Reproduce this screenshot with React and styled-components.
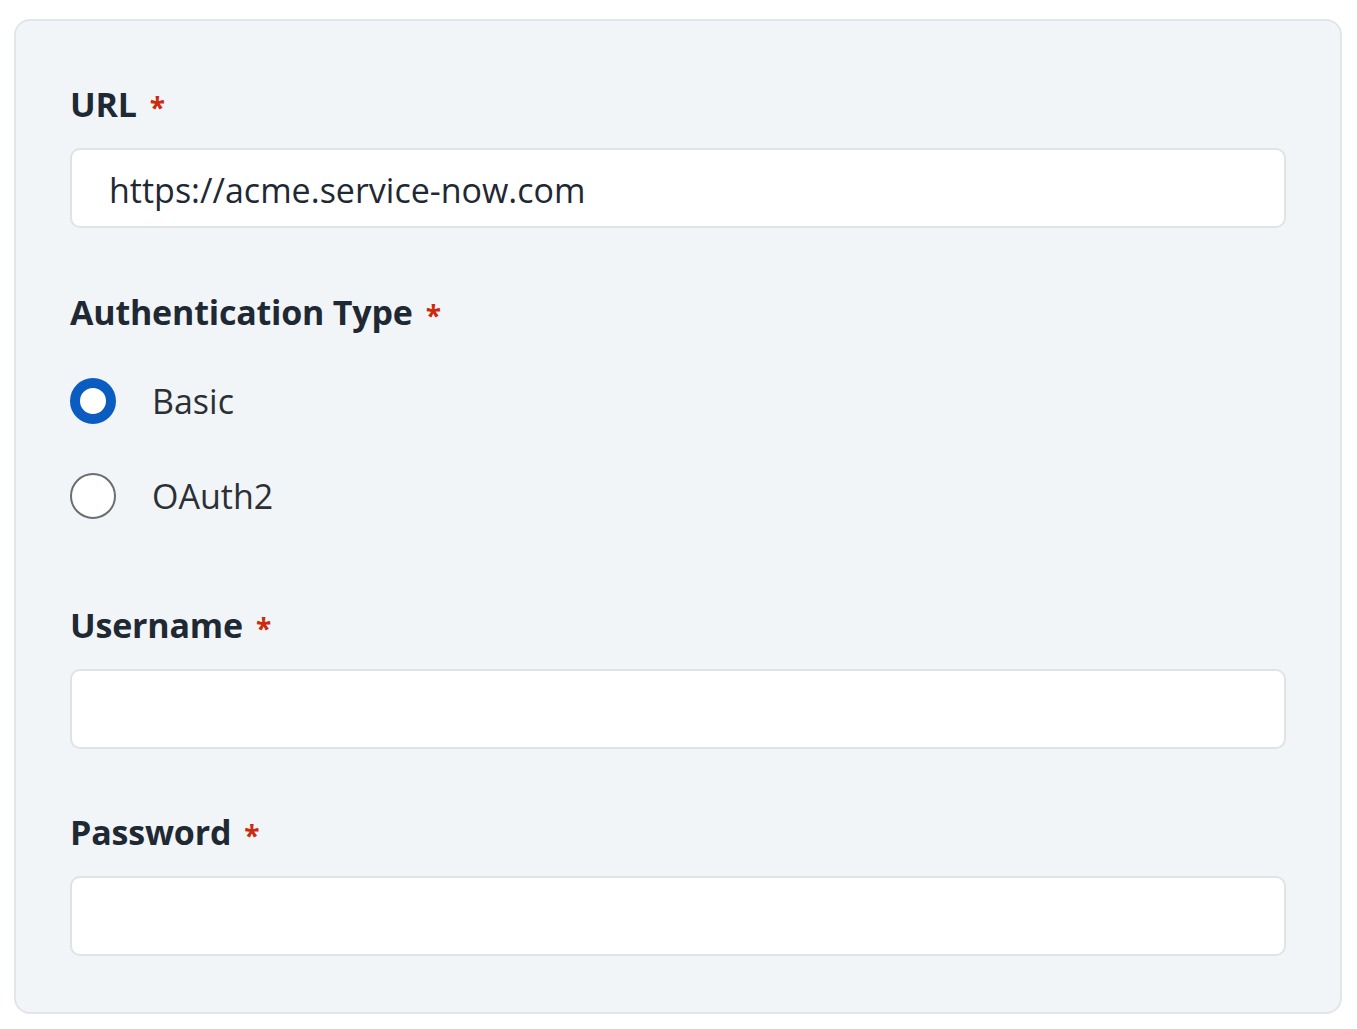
import React, { useState } from 'react';
import styled, { createGlobalStyle } from 'styled-components';

const GlobalStyle = createGlobalStyle`
  body {
    margin: 0;
    background: #ffffff;
    font-family: 'Open Sans', 'Noto Sans', sans-serif;
    color: #1f2933;
  }
`;

const Page = styled.div`
  padding: 19px 15px 16px 14px;
`;

const Card = styled.form`
  display: flex;
  flex-direction: column;
  background: #f2f5f8;
  border: 2px solid #e2e5e9;
  border-radius: 16px;
  padding: 61px 54px 56px 54px;
`;

const Field = styled.div`
  display: flex;
  flex-direction: column;
  gap: 22px;
  margin-top: ${props => props.$top || 0}px;
`;

const Label = styled.label`
  display: flex;
  align-items: center;
  height: 44px;
  font-size: 34px;
  font-weight: 700;
  color: #1f2933;
  letter-spacing: -0.2px;
`;

const Required = styled.span`
  color: #cc2a0e;
  font-size: 28px;
  margin-left: 13px;
  position: relative;
  top: 3px;
`;

const Input = styled.input`
  box-sizing: border-box;
  height: 80px;
  width: 100%;
  border: 2px solid #dfe2e6;
  border-radius: 10px;
  background: #ffffff;
  padding: 3px 37px 0;
  font-family: 'Open Sans', 'Noto Sans', sans-serif;
  font-size: 34px;
  color: #1f2933;
  outline: none;
`;

const RadioGroup = styled.div`
  display: flex;
  flex-direction: column;
  gap: 49px;
  margin-top: 44px;
`;

const RadioRow = styled.label`
  display: flex;
  align-items: center;
  gap: 36px;
  height: 46px;
  cursor: pointer;
  font-size: 34px;
  color: #2b3035;
`;

const RadioCircle = styled.span`
  box-sizing: border-box;
  width: 46px;
  height: 46px;
  border-radius: 50%;
  background: #ffffff;
  border: ${props => props.$checked ? '10px solid #0b5cc0' : '2px solid #6a6e73'};
  flex-shrink: 0;
`;

const HiddenRadio = styled.input`
  display: none;
`;

export default function App() {
  const [auth, setAuth] = useState('basic');
  const [url, setUrl] = useState('https://acme.service-now.com');
  const [username, setUsername] = useState('');
  const [password, setPassword] = useState('');

  const options = [
    { value: 'basic', label: 'Basic' },
    { value: 'oauth2', label: 'OAuth2' },
  ];

  return (
    <>
      <GlobalStyle />
      <Page>
        <Card onSubmit={e => e.preventDefault()}>
          <Field>
            <Label>URL<Required>*</Required></Label>
            <Input value={url} onChange={e => setUrl(e.target.value)} />
          </Field>

          <Field $top={62}>
            <Label>Authentication Type<Required>*</Required></Label>
          </Field>
          <RadioGroup>
            {options.map(opt => (
              <RadioRow key={opt.value}>
                <HiddenRadio
                  type="radio"
                  name="auth"
                  checked={auth === opt.value}
                  onChange={() => setAuth(opt.value)}
                />
                <RadioCircle $checked={auth === opt.value} />
                {opt.label}
              </RadioRow>
            ))}
          </RadioGroup>

          <Field $top={84}>
            <Label>Username<Required>*</Required></Label>
            <Input value={username} onChange={e => setUsername(e.target.value)} />
          </Field>

          <Field $top={61}>
            <Label>Password<Required>*</Required></Label>
            <Input type="password" value={password} onChange={e => setPassword(e.target.value)} />
          </Field>
        </Card>
      </Page>
    </>
  );
}
